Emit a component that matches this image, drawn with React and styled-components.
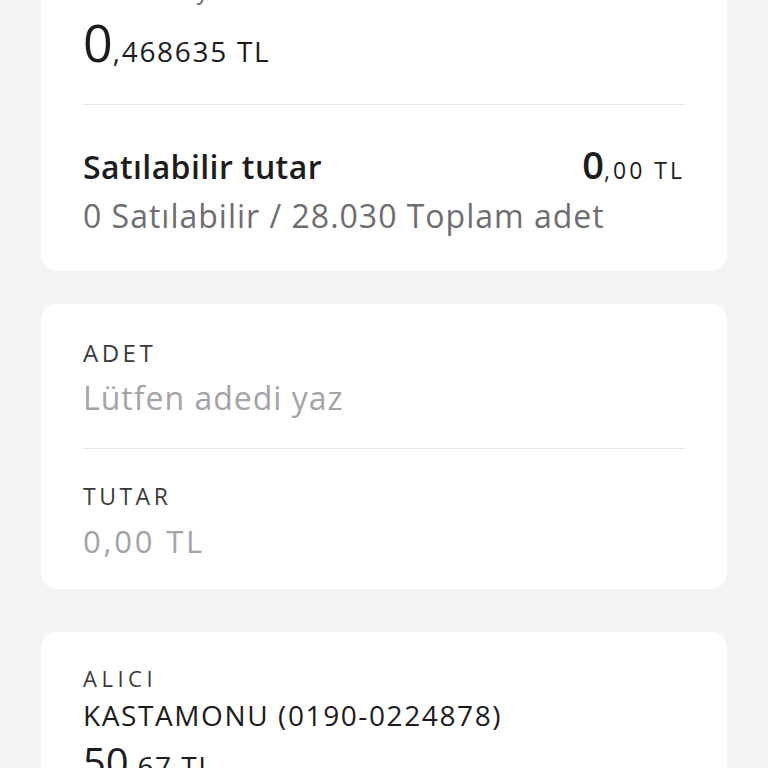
import React from "react";
import styled, { createGlobalStyle } from "styled-components";

const GlobalStyle = createGlobalStyle`
  body {
    margin: 0;
    background: #f3f3f5;
    font-family: "Open Sans", "Noto Sans", sans-serif;
    color: #1c1c1e;
  }
`;

const Page = styled.div`
  display: flex;
  flex-direction: column;
  gap: 33px;
  padding: 0 41px 40px;
  margin-top: -50px;
`;

const Card = styled.section`
  background: #ffffff;
  border-radius: 16px;
  padding: ${({ $pad }) => $pad};
  margin-top: ${({ $offset }) => $offset || 0}px;
`;

const Hint = styled.div`
  font-size: 24px;
  line-height: 32px;
  color: #6e6e73;
`;

const Amount = styled.div`
  font-size: ${({ $size }) => $size}px;
  line-height: ${({ $lh }) => $lh}px;
  font-weight: ${({ $weight }) => $weight || 400};
  margin-top: ${({ $mt }) => $mt || 0}px;
  color: #1c1c1e;
  white-space: nowrap;
`;

const Fraction = styled.span`
  font-size: ${({ $size }) => $size}px;
  font-weight: 400;
  line-height: 1;
  letter-spacing: ${({ $ls }) => $ls || 1}px;
`;

const Divider = styled.div`
  height: 1px;
  background: #e6e6e9;
  margin-top: ${({ $mt }) => $mt}px;
`;

const Row = styled.div`
  display: flex;
  justify-content: space-between;
  align-items: baseline;
  margin-top: ${({ $mt }) => $mt || 0}px;
`;

const Title = styled.span`
  font-size: 32px;
  line-height: 40px;
  font-weight: 600;
  letter-spacing: 0.4px;
`;

const SubText = styled.div`
  font-size: 32px;
  line-height: 40px;
  color: #6d6d72;
  letter-spacing: 1px;
  margin-top: ${({ $mt }) => $mt || 0}px;
`;

const FieldLabel = styled.div`
  font-size: ${({ $size }) => $size || 23}px;
  line-height: 28px;
  letter-spacing: ${({ $ls }) => $ls || 3.5}px;
  color: #3a3a3c;
  margin-top: ${({ $mt }) => $mt || 0}px;
`;

const FieldValue = styled.div`
  font-size: ${({ $size }) => $size}px;
  line-height: 36px;
  letter-spacing: ${({ $ls }) => $ls || 1}px;
  color: ${({ $muted }) => ($muted ? "#a3a3a8" : "#1c1c1e")};
  margin-top: ${({ $mt }) => $mt || 0}px;
  white-space: nowrap;
`;

export default function App() {
  return (
    <>
      <GlobalStyle />
      <Page>
        <Card $pad="24px 42px 35px">
          <Hint>Birim maliyet</Hint>
          <Amount $size={52} $lh={60} $mt={6}>
            0<Fraction $size={28} $ls={1.7}>,468635 TL</Fraction>
          </Amount>
          <Divider $mt={32} />
          <Row $mt={39}>
            <Title>Satılabilir tutar</Title>
            <Amount $size={38} $lh={40} $weight={600}>
              0<Fraction $size={23} $ls={3}>,00 TL</Fraction>
            </Amount>
          </Row>
          <SubText $mt={9}>0 Satılabilir / 28.030 Toplam adet</SubText>
        </Card>

        <Card $pad="35px 42px 30px">
          <FieldLabel $size={24}>ADET</FieldLabel>
          <FieldValue $size={32} $mt={13} $muted>
            Lütfen adedi yaz
          </FieldValue>
          <Divider $mt={32} />
          <FieldLabel $mt={33}>TUTAR</FieldLabel>
          <FieldValue $size={31} $mt={13} $ls={2.8} $muted>
            0,00 TL
          </FieldValue>
        </Card>

        <Card $pad="32px 42px 40px" $offset={10}>
          <FieldLabel $size={22} $ls={4.5}>ALICI</FieldLabel>
          <FieldValue $size={28} $mt={5} $ls={1.6}>
            KASTAMONU (0190-0224878)
          </FieldValue>
          <Amount $size={40} $lh={48} $weight={500} $mt={5}>
            50<Fraction $size={28} $ls={1.5}>,67 TL</Fraction>
          </Amount>
        </Card>
      </Page>
    </>
  );
}
